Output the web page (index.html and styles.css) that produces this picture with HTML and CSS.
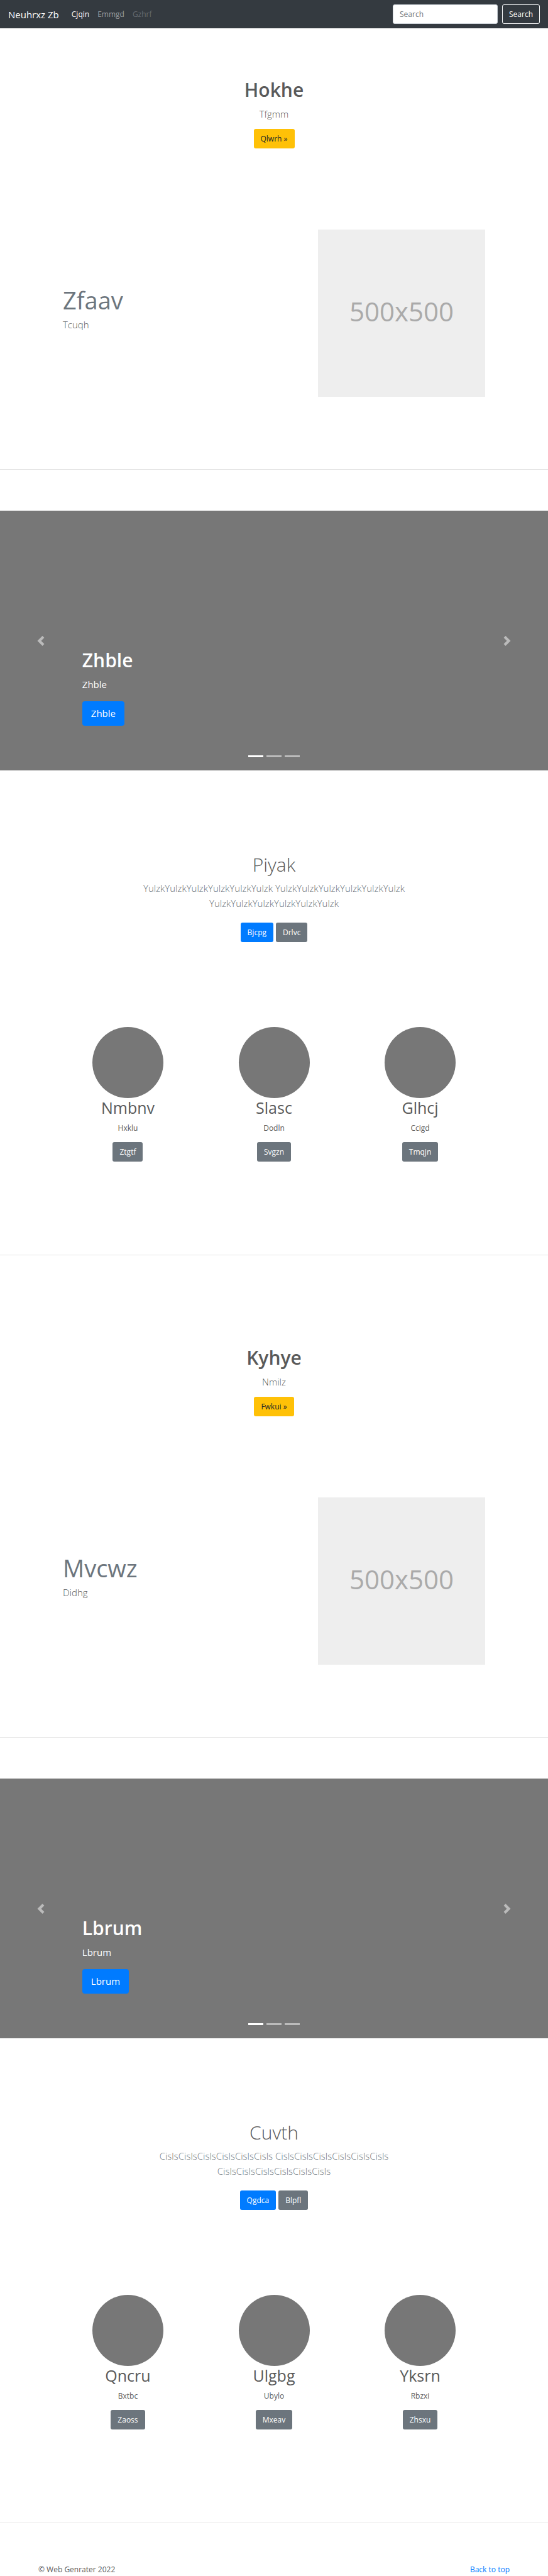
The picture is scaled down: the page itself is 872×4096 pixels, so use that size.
FILE: index.html
```html
<!DOCTYPE html>
<html lang="en">
<head>
<meta charset="utf-8">
<meta name="viewport" content="width=device-width, initial-scale=1">
<title>Neuhrxz Zb</title>
<link rel="stylesheet" href="styles.css">
</head>
<body id="top">
<header class="navbar">
  <a class="brand" href="#">Neuhrxz Zb</a>
  <nav class="nav-links">
    <a class="nav-link active" href="#">Cjqin</a>
    <a class="nav-link" href="#">Emmgd</a>
    <a class="nav-link disabled" href="#">Gzhrf</a>
  </nav>
  <form class="search">
    <input class="search-input" type="search" placeholder="Search" aria-label="Search">
    <button class="btn btn-outline" type="button">Search</button>
  </form>
</header>
<main>
  <div class="group">
    <section class="intro">
      <h1 class="title bold">Hokhe</h1>
      <p class="lead">Tfgmm</p>
      <a class="btn btn-warning" href="#">Qlwrh »</a>
    </section>
    <section class="feature">
      <div class="feature-text">
        <h2 class="feature-title">Zfaav</h2>
        <p class="lead">Tcuqh</p>
      </div>
      <div class="placeholder">500x500</div>
    </section>
    <hr class="rule">
    <section class="carousel">
      <div class="caption">
        <h1 class="title bold">Zhble</h1>
        <p class="caption-text">Zhble</p>
        <a class="btn btn-primary btn-large" href="#">Zhble</a>
      </div>
      <button class="control prev" type="button" aria-label="Previous"><svg class="chevron" viewBox="0 0 8 8"><path d="M5.25 0l-4 4 4 4 1.5-1.5L4.25 4l2.5-2.5L5.25 0z"/></svg></button>
      <button class="control next" type="button" aria-label="Next"><svg class="chevron" viewBox="0 0 8 8"><path d="M2.75 0l-1.5 1.5L3.75 4l-2.5 2.5L2.75 8l4-4-4-4z"/></svg></button>
      <div class="indicators"><span class="dot on"></span><span class="dot"></span><span class="dot"></span></div>
    </section>
    <section class="album">
      <h1 class="title light">Piyak</h1>
      <p class="lead muted">YulzkYulzkYulzkYulzkYulzkYulzk YulzkYulzkYulzkYulzkYulzkYulzk YulzkYulzkYulzkYulzkYulzkYulzk</p>
      <div class="actions">
        <a class="btn btn-primary" href="#">Bjcpg</a>
        <a class="btn btn-secondary" href="#">Drlvc</a>
      </div>
    </section>
    <section class="people">
      <article class="person"><div class="avatar"></div><h2 class="name">Nmbnv</h2><p class="note">Hxklu</p><a class="btn btn-secondary" href="#">Ztgtf</a></article>
      <article class="person"><div class="avatar"></div><h2 class="name">Slasc</h2><p class="note">Dodln</p><a class="btn btn-secondary" href="#">Svgzn</a></article>
      <article class="person"><div class="avatar"></div><h2 class="name">Glhcj</h2><p class="note">Ccigd</p><a class="btn btn-secondary" href="#">Tmqjn</a></article>
    </section>
    <hr class="rule">
  </div>
  <div class="group">
    <section class="intro">
      <h1 class="title bold">Kyhye</h1>
      <p class="lead">Nmilz</p>
      <a class="btn btn-warning" href="#">Fwkui »</a>
    </section>
    <section class="feature">
      <div class="feature-text">
        <h2 class="feature-title">Mvcwz</h2>
        <p class="lead">Didhg</p>
      </div>
      <div class="placeholder">500x500</div>
    </section>
    <hr class="rule">
    <section class="carousel">
      <div class="caption">
        <h1 class="title bold">Lbrum</h1>
        <p class="caption-text">Lbrum</p>
        <a class="btn btn-primary btn-large" href="#">Lbrum</a>
      </div>
      <button class="control prev" type="button" aria-label="Previous"><svg class="chevron" viewBox="0 0 8 8"><path d="M5.25 0l-4 4 4 4 1.5-1.5L4.25 4l2.5-2.5L5.25 0z"/></svg></button>
      <button class="control next" type="button" aria-label="Next"><svg class="chevron" viewBox="0 0 8 8"><path d="M2.75 0l-1.5 1.5L3.75 4l-2.5 2.5L2.75 8l4-4-4-4z"/></svg></button>
      <div class="indicators"><span class="dot on"></span><span class="dot"></span><span class="dot"></span></div>
    </section>
    <section class="album">
      <h1 class="title light">Cuvth</h1>
      <p class="lead muted">CislsCislsCislsCislsCislsCisls CislsCislsCislsCislsCislsCisls CislsCislsCislsCislsCislsCisls</p>
      <div class="actions">
        <a class="btn btn-primary" href="#">Qgdca</a>
        <a class="btn btn-secondary" href="#">Blpfl</a>
      </div>
    </section>
    <section class="people">
      <article class="person"><div class="avatar"></div><h2 class="name">Qncru</h2><p class="note">Bxtbc</p><a class="btn btn-secondary" href="#">Zaoss</a></article>
      <article class="person"><div class="avatar"></div><h2 class="name">Ulgbg</h2><p class="note">Ubylo</p><a class="btn btn-secondary" href="#">Mxeav</a></article>
      <article class="person"><div class="avatar"></div><h2 class="name">Yksrn</h2><p class="note">Rbzxi</p><a class="btn btn-secondary" href="#">Zhsxu</a></article>
    </section>
    <hr class="rule">
  </div>
</main>
<footer class="footer">
  <span>© Web Genrater 2022</span>
  <a class="top-link" href="#top">Back to top</a>
</footer>
</body>
</html>
```
FILE: styles.css
```css
* {
  box-sizing: border-box;
}

body {
  margin: 0;
  background: #fff;
  color: #5a5a5a;
  font-family: "Open Sans", "Noto Sans", sans-serif;
  font-size: 12px;
  line-height: 20px;
}

h1, h2, p {
  margin: 0;
}

a {
  text-decoration: none;
}

/* Navigation */
.navbar {
  display: flex;
  align-items: center;
  height: 45px;
  padding: 0 13px;
  background: #343a40;
}

.brand {
  margin-right: 20px;
  color: #fff;
  font-size: 15px;
}

.nav-links {
  display: flex;
  gap: 13px;
}

.nav-link {
  color: #999c9f;
}

.nav-link.active {
  color: #fff;
}

.nav-link.disabled {
  color: #676b70;
}

.search {
  display: flex;
  gap: 7px;
  margin-left: auto;
}

.search-input {
  width: 167px;
  height: 31px;
  padding: 0 10px;
  border: 1px solid #ced4da;
  border-radius: 3px;
  background: #fff;
  font: inherit;
}

.search-input::placeholder {
  color: #6c757d;
  opacity: 1;
}

/* Buttons */
.btn {
  display: inline-block;
  padding: 5px 10px;
  border: 1px solid transparent;
  border-radius: 3px;
  font-family: inherit;
  font-size: 12px;
  line-height: 19px;
  color: #fff;
}

.btn-outline {
  border-color: #f8f9fa;
  background: transparent;
}

.btn-warning {
  background: #ffc107;
  color: #212529;
}

.btn-primary {
  background: #007bff;
}

.btn-secondary {
  background: #6c757d;
}

.btn-large {
  padding: 7px 13px;
  border-radius: 4px;
  font-size: 15px;
  line-height: 23px;
}

/* Type */
.title {
  font-size: 30px;
  line-height: 38px;
}

.bold {
  font-weight: 600;
}

.light {
  font-weight: 300;
}

.lead {
  font-size: 15px;
  font-weight: 300;
  line-height: 24px;
}

.muted {
  color: #6c757d;
}

.rule {
  margin: 0;
  border: 0;
  border-top: 1px solid #e5e5e5;
}

/* Sections */
.group + .group {
  padding-top: 65px;
}

.intro {
  display: flex;
  flex-direction: column;
  align-items: center;
  padding-top: 79px;
}

.intro .lead {
  margin: 7px 0 12px;
}

.feature {
  display: flex;
  align-items: center;
  justify-content: space-between;
  padding: 129px 100px 115px;
}

.feature-text {
  padding-bottom: 16px;
}

.feature-title {
  margin-bottom: 3px;
  color: #6c757d;
  font-size: 38px;
  font-weight: 400;
  line-height: 48px;
}

.placeholder {
  display: flex;
  align-items: center;
  justify-content: center;
  width: 266px;
  aspect-ratio: 1;
  padding-bottom: 6px;
  background: #eee;
  color: #aaa;
  font-size: 42px;
}

.carousel {
  position: relative;
  display: flex;
  align-items: flex-end;
  height: 413px;
  margin-top: 65px;
  padding: 0 15% 71px;
  background: #777;
  color: #fff;
}

.caption {
  display: flex;
  flex-direction: column;
  align-items: flex-start;
}

.caption-text {
  margin: 7px 0 15px;
  font-size: 15px;
  line-height: 24px;
}

.control {
  position: absolute;
  top: 0;
  bottom: 0;
  display: flex;
  align-items: center;
  justify-content: center;
  width: 15%;
  padding: 0;
  border: 0;
  background: none;
  opacity: 0.5;
}

.prev {
  left: 0;
}

.next {
  right: 0;
}

.chevron {
  width: 16px;
  height: 16px;
  fill: #fff;
}

.indicators {
  position: absolute;
  right: 0;
  bottom: 21px;
  left: 0;
  display: flex;
  justify-content: center;
  gap: 5px;
}

.dot {
  width: 24px;
  height: 3px;
  background: #fff;
  opacity: 0.5;
}

.dot.on {
  opacity: 1;
}

.album {
  display: flex;
  flex-direction: column;
  align-items: center;
  padding: 131px 0 135px;
  text-align: center;
}

.album .lead {
  max-width: 58%;
  margin: 6px 0 19px;
}

.actions {
  display: flex;
  gap: 4px;
}

.people {
  display: grid;
  grid-template-columns: repeat(3, 1fr);
  width: 80%;
  margin: 0 auto;
  padding-bottom: 148px;
}

.person {
  display: flex;
  flex-direction: column;
  align-items: center;
}

.avatar {
  width: 113px;
  height: 113px;
  border-radius: 50%;
  background: #777;
}

.name {
  font-size: 25px;
  font-weight: 400;
  line-height: 31px;
}

.note {
  margin: 7px 0 12px;
}

/* Footer */
.footer {
  display: flex;
  justify-content: space-between;
  padding: 64px 61px 0;
}

.top-link {
  color: #007bff;
}
```
